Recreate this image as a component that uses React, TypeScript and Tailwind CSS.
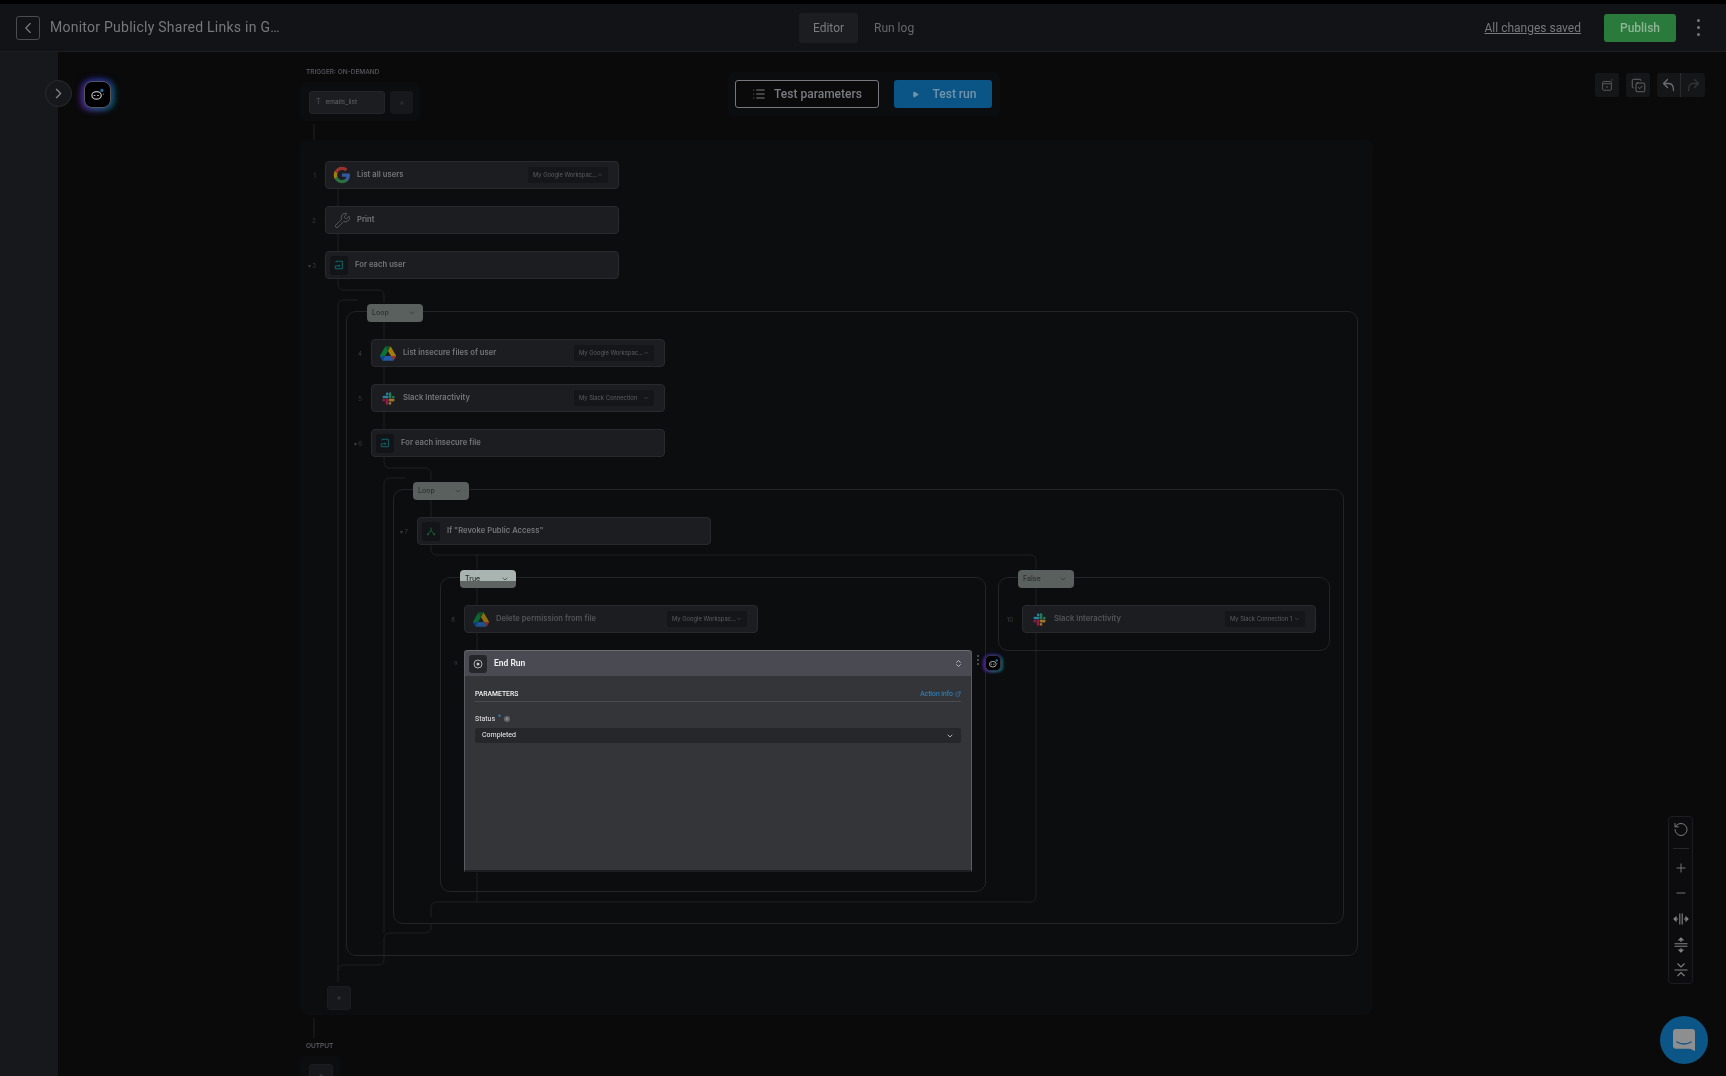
import React from "react";
import { ChevronLeft, ChevronRight, ChevronDown, ChevronsUpDown, List, Wrench, Play, RotateCcw, Plus, Minus, CopyCheck, ExternalLink } from "lucide-react";

const GoogleG = () => (
  <svg viewBox="0 0 24 24" className="w-[18px] h-[18px] opacity-60">
    <path fill="#4285F4" d="M22.56 12.25c0-.78-.07-1.53-.2-2.25H12v4.26h5.92c-.26 1.37-1.04 2.53-2.21 3.31v2.77h3.57c2.08-1.92 3.28-4.74 3.28-8.09z" />
    <path fill="#34A853" d="M12 23c2.97 0 5.46-.98 7.28-2.66l-3.57-2.77c-.98.66-2.23 1.06-3.71 1.06-2.86 0-5.29-1.93-6.16-4.53H2.18v2.84C3.99 20.53 7.7 23 12 23z" />
    <path fill="#FBBC05" d="M5.84 14.09c-.22-.66-.35-1.36-.35-2.09s.13-1.43.35-2.09V7.07H2.18C1.43 8.55 1 10.22 1 12s.43 3.45 1.18 4.93l2.85-2.22.81-.62z" />
    <path fill="#EA4335" d="M12 5.38c1.62 0 3.06.56 4.21 1.64l3.15-3.15C17.45 2.09 14.97 1 12 1 7.7 1 3.99 3.47 2.18 7.07l3.66 2.84c.87-2.6 3.3-4.53 6.16-4.53z" />
  </svg>
);

const Drive = ({ dim = false }: { dim?: boolean }) => (
  <svg viewBox="0 0 87.3 78" className={dim ? "w-[16px] h-[15px] opacity-50" : "w-[16px] h-[15px] opacity-60"}>
    <path fill="#0066da" d="m6.6 66.85 3.85 6.65c.8 1.4 1.95 2.5 3.3 3.3l13.75-23.8h-27.5c0 1.55.4 3.1 1.2 4.5z" />
    <path fill="#00ac47" d="m43.65 25-13.75-23.8c-1.35.8-2.5 1.9-3.3 3.3l-25.4 44a9.06 9.06 0 0 0 -1.2 4.5h27.5z" />
    <path fill="#ea4335" d="m73.55 76.8c1.35-.8 2.5-1.9 3.3-3.3l1.6-2.75 7.65-13.25c.8-1.4 1.2-2.95 1.2-4.5h-27.502l5.852 11.5z" />
    <path fill="#00832d" d="m43.65 25 13.75-23.8c-1.35-.8-2.9-1.2-4.5-1.2h-18.5c-1.6 0-3.15.45-4.5 1.2z" />
    <path fill="#2684fc" d="m59.8 53h-32.3l-13.75 23.8c1.35.8 2.9 1.2 4.5 1.2h50.8c1.6 0 3.15-.45 4.5-1.2z" />
    <path fill="#ffba00" d="m73.4 26.5-12.7-22c-.8-1.4-1.95-2.5-3.3-3.3l-13.75 23.8 16.15 28h27.45c0-1.55-.4-3.1-1.2-4.5z" />
  </svg>
);

const Slack = () => (
  <svg viewBox="0 0 24 24" className="w-[15px] h-[15px] opacity-60" fill="none" strokeLinecap="round" strokeWidth="4.2">
    <path stroke="#36C5F0" d="M4.5 9.5h5.5M9.8 4.4v.1" />
    <path stroke="#2EB67D" d="M14.5 4.2v5.6M19.7 9.6v.1" />
    <path stroke="#ECB22E" d="M14.2 14.5h5.5M14.4 19.7v.1" />
    <path stroke="#E01E5A" d="M9.6 14.2v5.6M4.4 14.5v.1" />
  </svg>
);

const LoopIcon = () => (
  <span className="flex items-center justify-center w-[18px] h-[19px] rounded-[3px] bg-[#121417] mr-[7px]">
    <svg viewBox="0 0 12 12" className="w-[10px] h-[10px]" fill="none" stroke="#0d6f74" strokeWidth="1.1">
      <path d="M2.5 3V1.5h7.5v9H1.5V7H7" />
      <path d="M5.5 5.5 7 7 5.5 8.5" />
    </svg>
  </span>
);

const BranchIcon = () => (
  <span className="flex items-center justify-center w-[18px] h-[19px] rounded-[3px] bg-[#121417] mr-[7px]">
    <svg viewBox="0 0 12 12" className="w-[10px] h-[10px]" fill="none" stroke="#1c6b3a" strokeWidth="1.1">
      <path d="M6 2v3.5M6 5.5 2.5 9.5M6 5.5 9.5 9.5" />
      <circle cx="2.3" cy="10" r=".8" />
      <circle cx="9.7" cy="10" r=".8" />
    </svg>
  </span>
);

const Bot = ({ small = false }: { small?: boolean }) => (
  <svg viewBox="0 0 24 24" className={small ? "w-[11px] h-[11px]" : "w-[15px] h-[15px]"} fill="none">
    <ellipse cx="10.5" cy="13.5" rx="7.5" ry="6" stroke="#b4b5b7" strokeWidth="2" />
    <path d="M6.5 13.5h1.5M12 13.5h1.5" stroke="#b4b5b7" strokeWidth="1.8" strokeLinecap="round" />
    <circle cx="19" cy="5.5" r="2.6" fill="#1c6fa8" />
    <circle cx="21.5" cy="11.5" r="1" fill="#777" />
  </svg>
);

type NodeProps = {
  pos: string;
  num: string;
  caret?: boolean;
  label: string;
  icon: React.ReactNode;
  select?: string;
  dim?: boolean;
};

const Node = ({ pos, num, caret, label, icon, select, dim }: NodeProps) => (
  <div className={`absolute ${pos} w-[294px] h-[28px] flex items-center pl-[4px] pr-[10px] rounded-[4px] bg-[#1c1d20] border border-[#292a2d]`}>
    <span className="absolute left-[-25px] w-[15px] text-right text-[6px] text-[#3d3e41]">{caret ? "▾ " : ""}{num}</span>
    {icon}
    <span className={dim ? "flex-1 text-[7.6px] font-semibold tracking-[0.05px] text-[#545558]" : "flex-1 text-[7.6px] font-semibold tracking-[0.05px] text-[#76777a]"}>{label}</span>
    {select && (
      <span className="flex items-center justify-between w-[80px] h-[16px] pl-[5px] pr-[5px] rounded-[2px] bg-[#15161a] text-[5.8px] text-[#5e5f62]">
        <span className="whitespace-nowrap">{select}</span>
        <ChevronDown size={6} strokeWidth={2} className="shrink-0" />
      </span>
    )}
  </div>
);

const AppIcon = ({ children }: { children: React.ReactNode }) => (
  <span className="flex items-center justify-center w-[24px] mr-[3px]">{children}</span>
);

const Tag = ({ pos, label, tone }: { pos: string; label: string; tone: string }) => (
  <div className={`absolute ${pos} w-[56px] h-[18px] flex items-center justify-between pl-[5px] pr-[7px] rounded-[4px] ${tone} text-[7px] font-medium text-[#2e302f]`}>
    <span>{label}</span>
    <ChevronDown size={8} strokeWidth={2} />
  </div>
);

const Frame = ({ pos }: { pos: string }) => (
  <div className={`absolute ${pos} rounded-[10px] border border-[#222428]`} />
);

const Square = ({ pos }: { pos: string }) => (
  <div className={`absolute ${pos} w-[24px] h-[24px] rounded-[3px] flex items-center justify-center bg-[#17181b] text-[#55565a] border border-[#1c1d20]`}>
    <Plus size={6} strokeWidth={2} />
  </div>
);

const Connectors = () => (
  <svg className="absolute left-0 top-0 w-[1726px] h-[1076px]" viewBox="0 0 1726 1076" fill="none" stroke="#1e2023" strokeWidth="1">
    <path d="M314 124v16M314 1018v20" />
    <path d="M338 189v17M338 234v17" />
    <path d="M338 279v5q0 6 6 6h34q6 0 6 6v6" />
    <path d="M358 300h-14q-6 0-6 6v676" />
    <path d="M384 322v17M384 367v17M384 412v17" />
    <path d="M384 457v5q0 6 6 6h35q6 0 6 6v6" />
    <path d="M405 478h-15q-6 0-6 6v449" />
    <path d="M431 500v17" />
    <path d="M431 545v4q0 6 6 6h593q6 0 6 6v8M477 555v14" />
    <path d="M477 588v17M477 633v17M1036 588v17M1036 633v263q0 6 -6 6h-593q-6 0 -6 6v9" />
    <path d="M477 873v29" />
    <path d="M431 923v4q0 6 -6 6h-35q-6 0 -6 6v16" />
    <path d="M384 955v4q0 6 -6 6h-34q-6 0 -6 6" />
  </svg>
);

export default function App() {
  return (
    <div className="relative w-[1726px] h-[1076px] overflow-hidden bg-[#0a0a0b] flex flex-col blur-[0.35px] font-['Inter',_sans-serif]">
      <div className="h-[4px] bg-black shrink-0" />
      <header className="h-[48px] shrink-0 flex items-center bg-[#111317] border-b border-[#1b1d20]">
        <div className="w-[400px] flex items-center pl-[16px]">
          <button className="flex items-center justify-center w-[24px] h-[24px] rounded-[3px] border border-[#4a4c4f] text-[#7c7d80]">
            <ChevronLeft size={18} strokeWidth={1.5} />
          </button>
          <span className="ml-[10px] text-[14px] tracking-[0.25px] text-[#77787b] font-['Roboto',_sans-serif] whitespace-nowrap">Monitor Publicly Shared Links in G…</span>
        </div>
        <nav className="ml-[399px] flex items-center text-[12px] font-['Roboto',_sans-serif]">
          <span className="flex items-center justify-center w-[59px] h-[30px] rounded-[3px] bg-[#1c1d20] text-[#7b7c7f]">Editor</span>
          <span className="ml-[16px] text-[#66676a]">Run log</span>
        </nav>
        <div className="ml-auto flex items-center pr-[26px] font-['Roboto',_sans-serif]">
          <span className="text-[12px] underline text-[#77787b]">All changes saved</span>
          <button className="ml-[23px] w-[72px] h-[28px] rounded-[3px] bg-[#2a7b3b] text-[12px] font-medium text-[#8eb596]">Publish</button>
          <span className="ml-[21px] flex flex-col gap-[4px]">
            <i className="block w-[3px] h-[3px] rounded-full bg-[#77787b]" />
            <i className="block w-[3px] h-[3px] rounded-full bg-[#77787b]" />
            <i className="block w-[3px] h-[3px] rounded-full bg-[#77787b]" />
          </span>
        </div>
      </header>

      <div className="flex-1 flex">
        <aside className="w-[58px] bg-[#17181b]" />
        <main className="flex-1 relative" />
      </div>

      {/* Workflow canvas: every item sits at its own diagram position */}
      <div className="absolute left-[300px] top-[140px] w-[1073px] h-[875px] rounded-[8px] bg-[#0c0d0f]" />
      <div className="absolute left-[300px] top-[82px] w-[120px] h-[39px] rounded-[6px] bg-[#0c0d0f]" />
      <div className="absolute left-[300px] top-[1056px] w-[40px] h-[30px] rounded-[6px] bg-[#0c0d0f]" />

      <Connectors />

      <Frame pos="left-[346px] top-[311px] w-[1012px] h-[645px]" />
      <Frame pos="left-[393px] top-[489px] w-[951px] h-[435px]" />
      <Frame pos="left-[440px] top-[577px] w-[546px] h-[315px]" />
      <Frame pos="left-[998px] top-[577px] w-[332px] h-[74px]" />

      <button className="absolute left-[45px] top-[80px] w-[27px] h-[27px] rounded-full flex items-center justify-center bg-[#17181b] border border-[#2b2c2f] text-[#8a8b8d]">
        <ChevronRight size={17} strokeWidth={1.6} />
      </button>
      <div className="absolute left-[84px] top-[81px] w-[27px] h-[27px] rounded-[8px] flex items-center justify-center bg-black border border-[#55565c] shadow-[0_-2px_6px_#25258c,3px_1px_6px_#0c6a70,-3px_2px_6px_#55268a]">
        <Bot />
      </div>

      <div className="absolute left-[306px] top-[68px] text-[6.5px] text-[#5c5d60] font-medium whitespace-nowrap">TRIGGER: ON-DEMAND</div>
      <div className="absolute left-[309px] top-[91px] w-[76px] h-[23px] flex items-center pl-[6px] rounded-[3px] bg-[#1c1d20] border border-[#24252a] text-[6.5px] text-[#66676a]">
        <span className="mr-[5px] text-[7px] text-[#55565a]">T</span>emails_list
      </div>
      <div className="absolute left-[390px] top-[91px] w-[23px] h-[23px] rounded-[3px] flex items-center justify-center bg-[#17181b] text-[#45464a]">
        <Plus size={6} strokeWidth={2} />
      </div>

      <div className="absolute left-[728px] top-[72px] w-[272px] h-[44px] rounded-[6px] bg-[#0c0d0f] flex items-center pl-[7px] gap-[15px] font-['Roboto',_sans-serif]">
        <button className="w-[144px] h-[28px] rounded-[3px] flex items-center justify-center gap-[8px] border border-[#77787b] bg-[#0a0a0b] text-[12px] font-medium text-[#7b7c7f]">
          <List size={14} strokeWidth={1.8} />Test parameters
        </button>
        <button className="w-[98px] h-[28px] rounded-[3px] flex items-center justify-center gap-[14px] pl-[2px] bg-[#0a5585] text-[12px] font-medium text-[#7395ab]">
          <Play size={7} fill="currentColor" />Test run
        </button>
      </div>

      <div className="absolute left-[1595px] top-[73px] flex gap-[7px] text-[#5a5b5e]">
        <span className="w-[24px] h-[24px] rounded-[3px] bg-[#151618] flex items-center justify-center">
          <svg viewBox="0 0 16 16" className="w-[14px] h-[14px]" fill="none" stroke="currentColor" strokeWidth="1.1">
            <rect x="3" y="4" width="10" height="10" rx="1.2" />
            <path d="M3 6.5h10M8 9v2.4M13.5 1.5v1.5" />
          </svg>
        </span>
        <span className="w-[24px] h-[24px] rounded-[3px] bg-[#151618] flex items-center justify-center text-[#77787b]">
          <CopyCheck size={15} strokeWidth={1.3} />
        </span>
        <span className="w-[48px] h-[24px] rounded-[3px] bg-[#151618] flex items-center">
          <span className="w-[24px] h-[24px] flex items-center justify-center border-r border-[#2a2b2e] text-[#6c6d70]">
            <svg viewBox="0 0 16 16" className="w-[16px] h-[16px]" fill="none" stroke="currentColor" strokeWidth="1.3" strokeLinejoin="round" strokeLinecap="round">
              <path d="M6.5 2.5 2.5 6.5l4 4M2.5 6.5H8c3 0 4.5 2.5 4.5 7" />
            </svg>
          </span>
          <span className="w-[24px] h-[24px] flex items-center justify-center text-[#333437]">
            <svg viewBox="0 0 16 16" className="w-[16px] h-[16px]" fill="none" stroke="currentColor" strokeWidth="1.3" strokeLinejoin="round" strokeLinecap="round">
              <path d="M9.5 2.5l4 4-4 4M13.5 6.5H8c-3 0-4.5 2.5-4.5 7" />
            </svg>
          </span>
        </span>
      </div>

      <Node pos="left-[325px] top-[161px]" num="1" label="List all users" icon={<AppIcon><GoogleG /></AppIcon>} select="My Google Workspac..." />
      <Node pos="left-[325px] top-[206px]" num="2" label="Print" icon={<AppIcon><Wrench size={17} strokeWidth={1.1} className="text-[#66676a]" /></AppIcon>} />
      <Node pos="left-[325px] top-[251px]" num="3" caret label="For each user" icon={<LoopIcon />} />
      <Tag pos="left-[367px] top-[304px]" label="Loop" tone="bg-[#5a605e]" />
      <Node pos="left-[371px] top-[339px]" num="4" label="List insecure files of user" icon={<AppIcon><Drive /></AppIcon>} select="My Google Workspac..." />
      <Node pos="left-[371px] top-[384px]" num="5" label="Slack Interactivity" icon={<AppIcon><Slack /></AppIcon>} select="My Slack Connection" />
      <Node pos="left-[371px] top-[429px]" num="6" caret label="For each insecure file" icon={<LoopIcon />} />
      <Tag pos="left-[413px] top-[482px]" label="Loop" tone="bg-[#5a605e]" />
      <Node pos="left-[417px] top-[517px]" num="7" caret label={'If "Revoke Public Access"'} icon={<BranchIcon />} />
      <Tag pos="left-[460px] top-[570px]" label="True" tone="bg-[linear-gradient(#a9b4b0_0,#a9b4b0_61%,#5d6462_61%)]" />
      <Tag pos="left-[1018px] top-[570px]" label="False" tone="bg-[#5a605e]" />
      <Node pos="left-[464px] top-[605px]" num="8" dim label="Delete permission from file" icon={<AppIcon><Drive dim /></AppIcon>} select="My Google Workspac..." />
      <Node pos="left-[1022px] top-[605px]" num="10" dim label="Slack Interactivity" icon={<AppIcon><Slack /></AppIcon>} select="My Slack Connection 1" />

      <section className="absolute left-[464px] top-[650px] w-[508px] h-[222px] rounded-t-[3px] flex flex-col bg-[#343539] border-x border-[#5b5c61] border-b-2 border-b-[#1c1d20] font-['Roboto',_sans-serif]">
        <span className="absolute left-[-11px] top-[8px] text-[6px] text-[#3d3e41]">9</span>
        <div className="h-[26px] shrink-0 flex items-center pl-[4px] pr-[8px] rounded-t-[3px] bg-[#4a4b52] border-t border-[#6b6c71]">
          <span className="w-[18px] h-[18px] rounded-[3px] bg-[#25262a] flex items-center justify-center">
            <svg viewBox="0 0 12 12" className="w-[10px] h-[10px]" fill="none" stroke="#c8c9cb" strokeWidth="1">
              <circle cx="6" cy="6" r="4.8" />
              <circle cx="6" cy="6" r="1.8" fill="#c8c9cb" stroke="none" />
            </svg>
          </span>
          <span className="ml-[7px] flex-1 text-[8.5px] font-semibold text-[#f0f0f2]">End Run</span>
          <ChevronsUpDown size={9} className="text-[#d8d9db]" />
        </div>
        <div className="pl-[10px] pr-[10px] flex flex-col">
          <div className="h-[26px] pb-[2px] flex items-end justify-between border-b border-[#4a4b50]">
            <span className="text-[6.8px] font-medium text-[#f0f0f2]">PARAMETERS</span>
            <span className="flex items-center gap-[2px] text-[6.8px] text-[#2b8fd6]">Action info<ExternalLink size={6} /></span>
          </div>
          <div className="mt-[12px] h-[10px] flex items-center text-[7px] text-[#e6e6e8]">
            Status<span className="ml-[3px] mb-[3px] text-[#2b8fd6]">*</span>
            <span className="ml-[3px] w-[6px] h-[6px] rounded-full bg-[#66676b] flex items-center justify-center text-[4px] text-[#e6e6e8]">i</span>
          </div>
          <div className="mt-[4px] h-[15px] pl-[7px] pr-[7px] flex items-center justify-between rounded-[2px] bg-[#26272b] text-[7px] text-[#f0f0f2]">
            Completed<ChevronDown size={8} strokeWidth={2} />
          </div>
        </div>
      </section>
      <span className="absolute left-[977px] top-[655px] flex flex-col gap-[2px]">
        <i className="block w-[2px] h-[2px] rounded-full bg-[#5e5f62]" />
        <i className="block w-[2px] h-[2px] rounded-full bg-[#5e5f62]" />
        <i className="block w-[2px] h-[2px] rounded-full bg-[#5e5f62]" />
      </span>
      <div className="absolute left-[985px] top-[655px] w-[16px] h-[16px] rounded-[5px] flex items-center justify-center bg-black border border-[#33343a] shadow-[0_-1px_3px_#25258c,2px_1px_3px_#0c6a70,-2px_1px_3px_#55268a]">
        <Bot small />
      </div>

      <Square pos="left-[327px] top-[986px]" />
      <div className="absolute left-[306px] top-[1042px] text-[6.5px] text-[#66676a] font-medium">OUTPUT</div>
      <Square pos="left-[309px] top-[1064px]" />

      <div className="absolute left-[1668px] top-[816px] w-[25px] h-[168px] rounded-[4px] flex flex-col items-center border border-[#1c1d20] bg-[#0c0c0e] text-[#808184]">
        <span className="h-[32px] pb-[6px] flex items-center justify-center border-b border-[#26272a] w-[16px]"><RotateCcw size={17} strokeWidth={1.4} /></span>
        <span className="h-[26px] mt-[6px] flex items-center justify-center"><Plus size={14} strokeWidth={1.5} /></span>
        <span className="h-[26px] flex items-center justify-center"><Minus size={14} strokeWidth={1.5} /></span>
        <span className="h-[26px] flex items-center justify-center">
          <svg viewBox="0 0 16 16" className="w-[16px] h-[16px]" fill="none" stroke="currentColor" strokeWidth="1.1">
            <path d="M6.8 2.5v11M9.2 2.5v11M1 8h4M11 8h4" />
            <path d="M1 8l2-2v4zM15 8l-2-2v4z" fill="currentColor" />
          </svg>
        </span>
        <span className="h-[26px] flex items-center justify-center">
          <svg viewBox="0 0 16 16" className="w-[16px] h-[16px]" fill="none" stroke="currentColor" strokeWidth="1.1">
            <path d="M1.5 6.8h13M1.5 9.2h13M8 1v4M8 11v4" />
            <path d="M8 1 6 3h4zM8 15l-2-2h4z" fill="currentColor" />
          </svg>
        </span>
        <span className="h-[26px] flex items-center justify-center">
          <svg viewBox="0 0 16 16" className="w-[16px] h-[16px]" fill="none" stroke="currentColor" strokeWidth="1.1">
            <path d="M4.5 1.5 8 5l3.5-3.5M1.5 8h13M4.5 14 8 10.5l3.5 3.5" />
          </svg>
        </span>
      </div>

      <button className="absolute left-[1660px] top-[1016px] w-[48px] h-[48px] rounded-full flex items-center justify-center bg-[#0c5587]">
        <svg viewBox="0 0 22 22" className="w-[22px] h-[24px]" fill="none">
          <path d="M3 0h16a3 3 0 0 1 3 3v19l-5-2.2H3a3 3 0 0 1-3-3V3a3 3 0 0 1 3-3z" fill="#8d8e90" />
          <path d="M4 13c4 2.6 10 2.6 14 0" stroke="#0c5587" strokeWidth="1.4" strokeLinecap="round" />
        </svg>
      </button>
    </div>
  );
}
